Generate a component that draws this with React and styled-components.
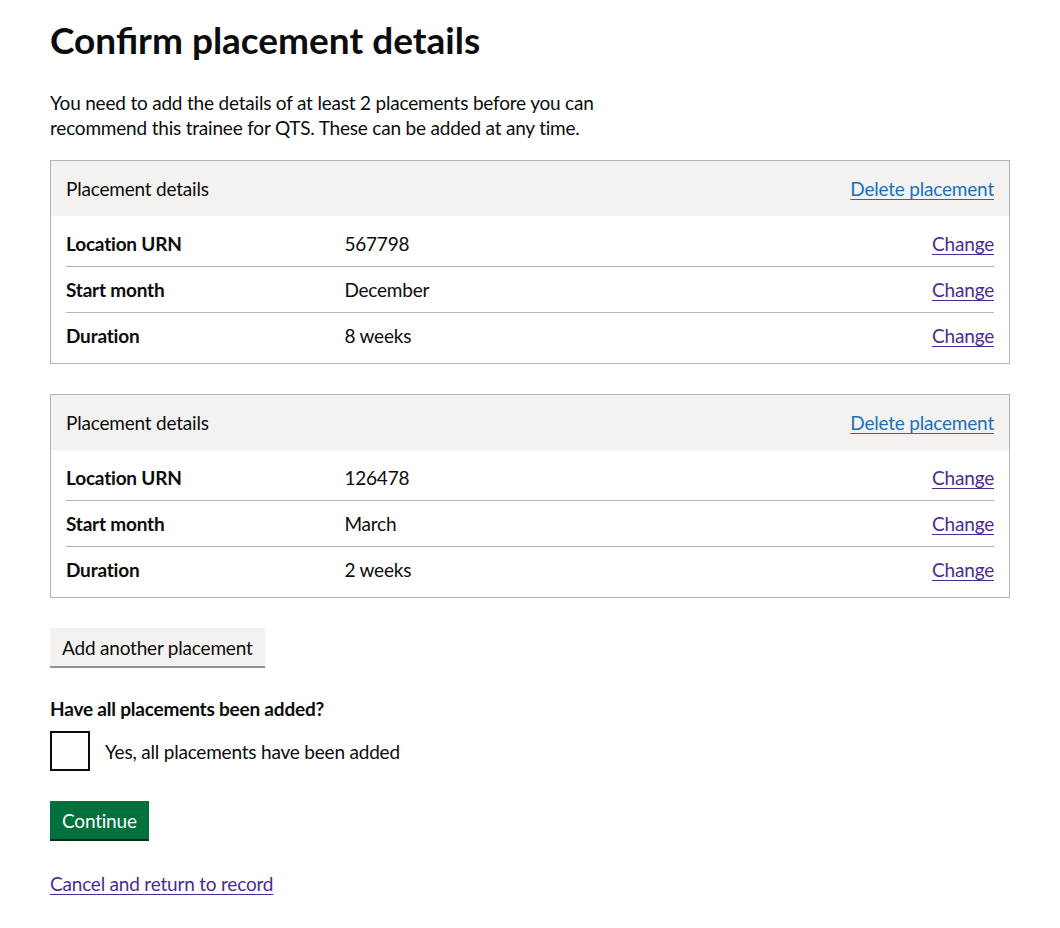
import React from 'react';
import styled, { createGlobalStyle } from 'styled-components';

const GlobalStyle = createGlobalStyle`
  body {
    margin: 0;
    background: #ffffff;
    color: #0b0c0c;
    font-family: Lato, 'Noto Sans', Arial, sans-serif;
    letter-spacing: -0.2px;
  }
`;

const Main = styled.main`
  padding: 20px 50px 40px;
  width: 960px;
`;

const Title = styled.h1`
  font-size: 37px;
  line-height: 40px;
  font-weight: 700;
  letter-spacing: 0;
  margin: 0 0 30px;
`;

const Lead = styled.p`
  font-size: 19px;
  line-height: 25px;
  margin: 0 0 20px;
  max-width: 610px;
`;

const Card = styled.section`
  border: 1px solid #b1b4b6;
  margin-bottom: 30px;
`;

const CardHeader = styled.div`
  display: flex;
  justify-content: space-between;
  align-items: center;
  background: #f3f2f1;
  padding: 15px;
  font-size: 19px;
  line-height: 25px;
`;

const CardBody = styled.dl`
  margin: 0;
  padding: 5px 15px;
`;

const Row = styled.div`
  display: grid;
  grid-template-columns: 30% 1fr auto;
  padding: 10px 0;
  font-size: 19px;
  line-height: 25px;
  border-bottom: ${(p) => (p.$last ? 'none' : '1px solid #b1b4b6')};
`;

const Key = styled.dt`
  font-weight: 700;
`;

const Value = styled.dd`
  margin: 0;
`;

const Action = styled.dd`
  margin: 0;
  text-align: right;
`;

const Link = styled.a`
  color: ${(p) => (p.$visited ? '#4c2c92' : '#1d70b8')};
  text-decoration: underline;
  text-decoration-thickness: 1px;
  text-underline-offset: 3px;
  font-size: 19px;
  line-height: 25px;
  cursor: pointer;
`;

const LinkLine = styled.p`
  margin: 0;
  font-size: 19px;
  line-height: 25px;
`;

const Button = styled.button`
  display: block;
  font-family: inherit;
  letter-spacing: inherit;
  font-size: 19px;
  line-height: 25px;
  padding: 7px 12px 6px;
  border: none;
  border-radius: 0;
  background: ${(p) => (p.$primary ? '#00703c' : '#f3f2f1')};
  color: ${(p) => (p.$primary ? '#ffffff' : '#0b0c0c')};
  box-shadow: 0 2px 0 ${(p) => (p.$primary ? '#002d18' : '#929191')};
  margin-bottom: ${(p) => p.$mb || 0}px;
  cursor: pointer;
`;

const Question = styled.h2`
  font-size: 19px;
  line-height: 25px;
  font-weight: 700;
  margin: 0 0 10px;
`;

const CheckRow = styled.label`
  display: flex;
  align-items: center;
  gap: 15px;
  font-size: 19px;
  line-height: 25px;
  margin-bottom: 30px;
`;

const Box = styled.span`
  width: 36px;
  height: 36px;
  border: 2px solid #0b0c0c;
  flex: none;
`;

const placements = [
  { urn: '567798', month: 'December', duration: '8 weeks' },
  { urn: '126478', month: 'March', duration: '2 weeks' },
];

function PlacementCard({ data }) {
  const rows = [
    ['Location URN', data.urn],
    ['Start month', data.month],
    ['Duration', data.duration],
  ];
  return (
    <Card>
      <CardHeader>
        <span>Placement details</span>
        <Link>Delete placement</Link>
      </CardHeader>
      <CardBody>
        {rows.map(([k, v], i) => (
          <Row key={k} $last={i === rows.length - 1}>
            <Key>{k}</Key>
            <Value>{v}</Value>
            <Action>
              <Link $visited>Change</Link>
            </Action>
          </Row>
        ))}
      </CardBody>
    </Card>
  );
}

export default function App() {
  return (
    <>
      <GlobalStyle />
      <Main>
        <Title>Confirm placement details</Title>
        <Lead>
          You need to add the details of at least 2 placements before you can
          recommend this trainee for QTS. These can be added at any time.
        </Lead>
        {placements.map((p) => (
          <PlacementCard key={p.urn} data={p} />
        ))}
        <Button $mb={30}>Add another placement</Button>
        <Question>Have all placements been added?</Question>
        <CheckRow>
          <Box />
          Yes, all placements have been added
        </CheckRow>
        <Button $primary $mb={32}>Continue</Button>
        <LinkLine>
          <Link $visited>Cancel and return to record</Link>
        </LinkLine>
      </Main>
    </>
  );
}
